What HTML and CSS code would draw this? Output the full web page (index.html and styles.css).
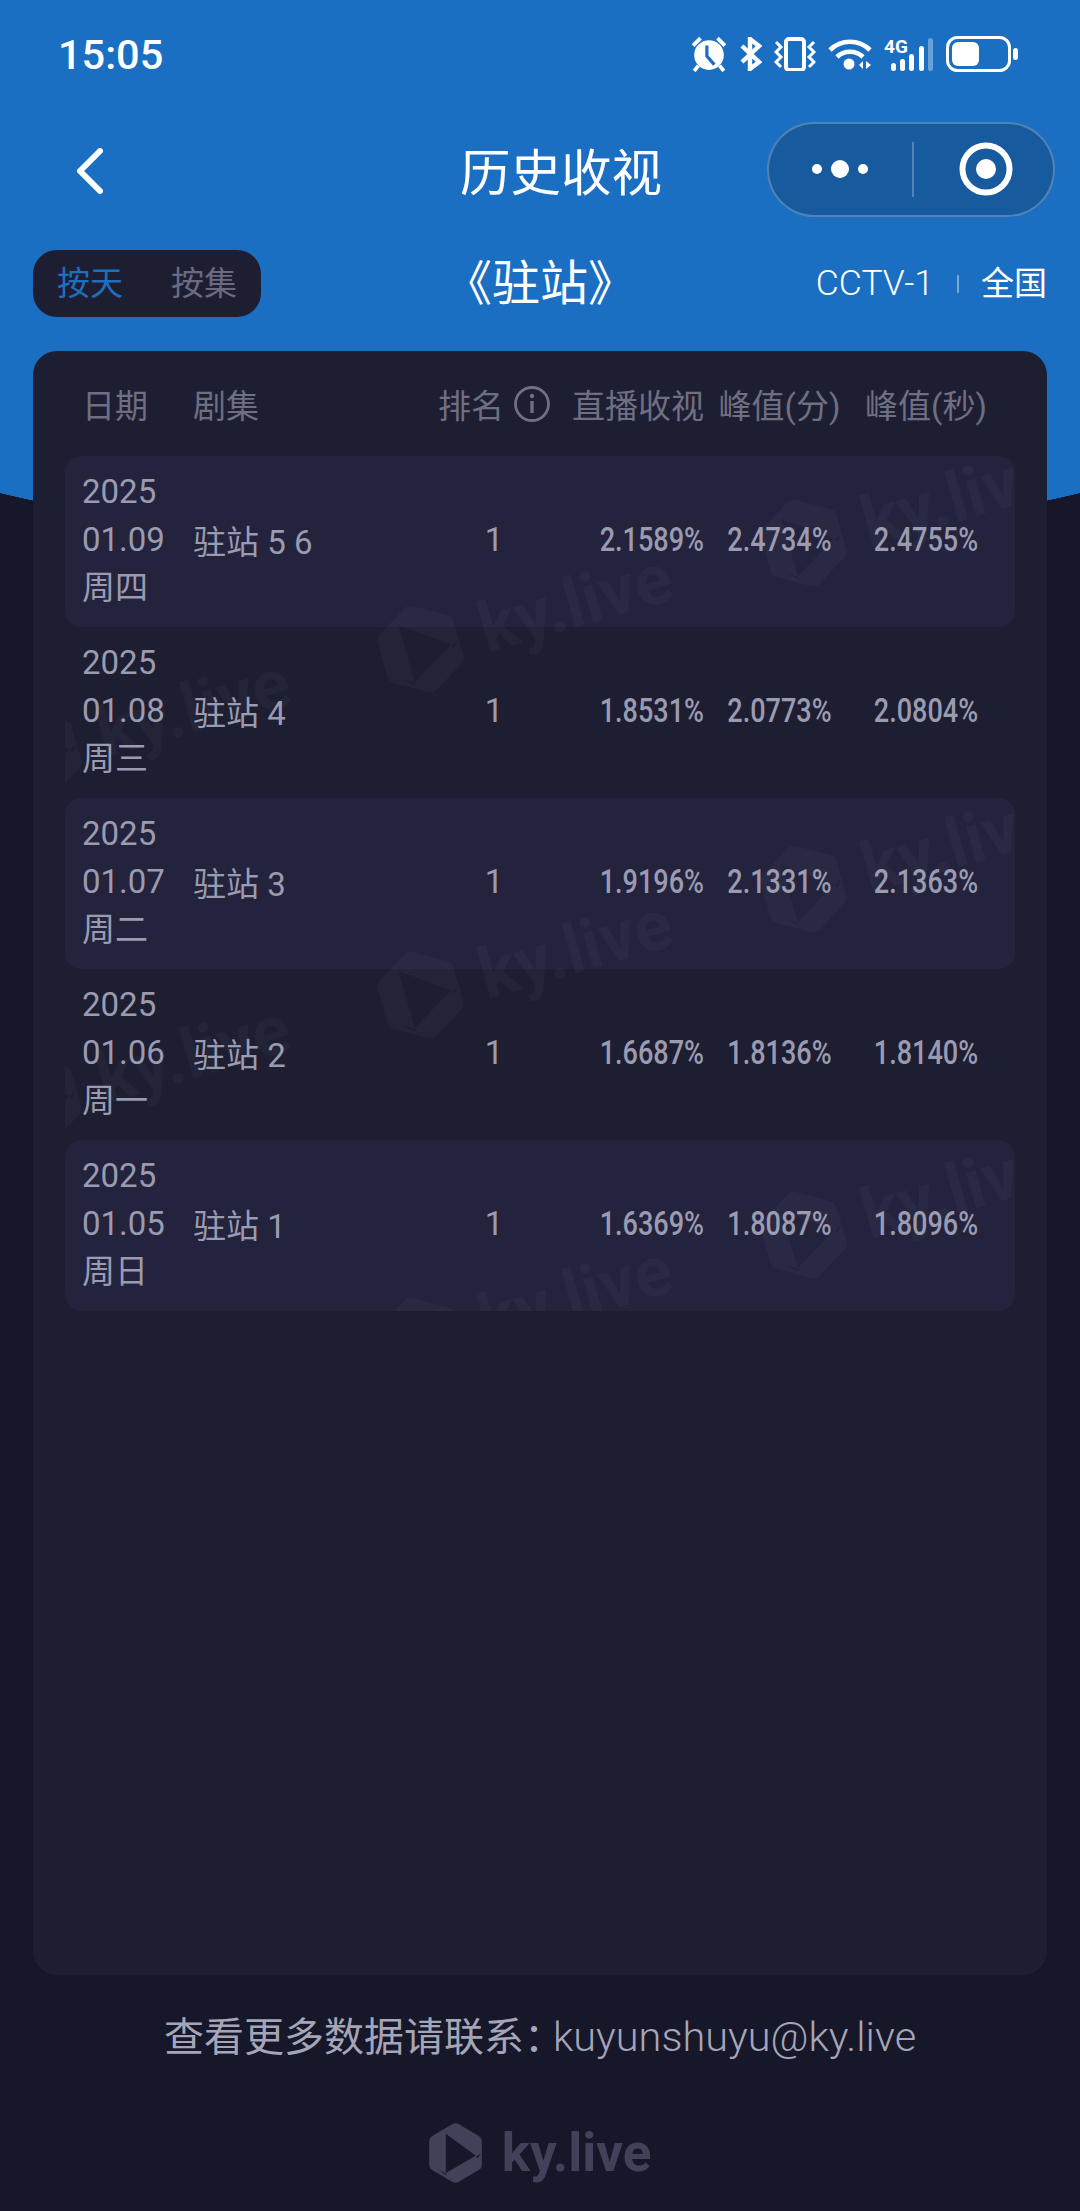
FILE: index.html
```html
<!DOCTYPE html>
<html lang="zh-CN">
<head>
    <meta charset="UTF-8">
    <meta name="viewport" content="width=device-width, initial-scale=1.0">
    <title>历史收视</title>
    <link rel="stylesheet" href="styles.css">
</head>

<body>
    <svg class="defs" width="0" height="0">
        <defs>
            <path id="logo" fill-rule="evenodd" d="M70 3Q79-2 88 3L150 40Q158 45 158 54V126Q158 135 150 140L88 177Q79 182 70 177L8 140Q0 135 0 126V54Q0 45 8 40ZM50 32V150L140 98ZM50 152L26 137L52 158ZM142 100L156 92L144 106Z"/>
        </defs>
    </svg>

    <div class="hero-bg"></div>

    <div class="status-bar">
        <span class="time">15:05</span>
        <div class="status-icons">
            <svg width="36" height="36" viewBox="0 0 34 34">
                <circle cx="17" cy="18" r="14" fill="#fff"/>
                <path d="M15 9V19L22 27" fill="none" stroke="#1b6fc2" stroke-width="3"/>
                <path d="M2 9L9 2M25 2L32 9M7 28L3 33M27 28L31 33" fill="none" stroke="#fff" stroke-width="3.6"/>
            </svg>
            <svg width="23" height="34" viewBox="0 0 23 34">
                <path d="M3 9L20 25L11 32V2L20 9L3 25" fill="none" stroke="#fff" stroke-width="4.4"/>
            </svg>
            <svg width="42" height="34" viewBox="0 0 42 34">
                <rect x="12" y="2" width="18" height="31" rx="3" fill="none" stroke="#fff" stroke-width="4"/>
                <path d="M2 5L7 10L2 15L7 20L2 25L7 30M40 5L35 10L40 15L35 20L40 25L35 30" fill="none" stroke="#fff" stroke-width="3"/>
            </svg>
            <svg width="44" height="33" viewBox="0 0 44 33">
                <path d="M2 12C13 1 31 1 42 12M9 19C16 12 28 12 35 19" fill="none" stroke="#fff" stroke-width="4.6"/>
                <circle cx="21" cy="26" r="5.5" fill="#fff"/>
                <path d="M31 27L35 23V31ZM43 27L38 23V31Z" fill="#fff"/>
            </svg>
            <svg width="50" height="36" viewBox="0 0 50 36">
                <text x="0" y="17" class="net-label">4G</text>
                <rect x="7" y="27" width="5" height="8" rx="2.5" fill="#fff"/>
                <rect x="16" y="23" width="5" height="12" rx="2.5" fill="#fff"/>
                <rect x="25" y="18" width="5" height="17" rx="2.5" fill="#fff"/>
                <rect x="35" y="10" width="5" height="25" rx="2.5" fill="#fff"/>
                <rect x="44" y="2" width="5" height="33" rx="2.5" fill="#fff" opacity="0.35"/>
            </svg>
            <svg width="72" height="36" viewBox="0 0 72 36">
                <rect x="1.5" y="1.5" width="62" height="33" rx="10" fill="none" stroke="#fff" stroke-width="3"/>
                <rect x="6" y="6" width="27" height="24" rx="6" fill="#fff"/>
                <rect x="67" y="12" width="5" height="12" rx="2.5" fill="#fff"/>
            </svg>
        </div>
    </div>

    <div class="nav">
        <svg class="back" width="26" height="46" viewBox="0 0 26 46">
            <path d="M23 3L3 23L23 43" fill="none" stroke="#fff" stroke-width="6" stroke-linecap="round" stroke-linejoin="round"/>
        </svg>
        <h1 class="nav-title">历史收视</h1>
        <div class="capsule">
            <div class="capsule-more">
                <span class="dot"></span>
                <span class="dot dot-big"></span>
                <span class="dot"></span>
            </div>
            <div class="capsule-close">
                <svg width="54" height="54" viewBox="0 0 54 54">
                    <circle cx="27" cy="27" r="23.5" fill="none" stroke="#fff" stroke-width="6"/>
                    <circle cx="27" cy="27" r="10" fill="#fff"/>
                </svg>
            </div>
        </div>
    </div>

    <div class="info-bar">
        <div class="segment">
            <span class="segment-on">按天</span>
            <span>按集</span>
        </div>
        <h2 class="show-name">《驻站》</h2>
        <div class="channel">
            <span class="channel-name">CCTV-1</span>
            <span class="channel-sep"></span>
            <span>全国</span>
        </div>
    </div>

    <div class="card">
        <div class="table-row table-head">
            <span>日期</span>
            <span>剧集</span>
            <span class="rank-head">排名
                <svg width="38" height="38" viewBox="0 0 36 36">
                    <circle cx="18" cy="18" r="16.5" fill="none" stroke="currentColor" stroke-width="2.8"/>
                    <path d="M18 15V27" stroke="currentColor" stroke-width="3.4"/>
                    <circle cx="18" cy="10" r="2.2" fill="currentColor"/>
                </svg>
            </span>
            <span class="live">直播收视</span>
            <span class="peak">峰值(分)</span>
            <span class="peak">峰值(秒)</span>
        </div>

        <div class="table-body">
            <div class="table-row">
                <div class="date">2025<br>01.09<br>周四</div>
                <span>驻站 5 6</span>
                <span class="rank">1</span>
                <span class="live num">2.1589%</span>
                <span class="peak num">2.4734%</span>
                <span class="peak num">2.4755%</span>
            </div>
            <div class="table-row">
                <div class="date">2025<br>01.08<br>周三</div>
                <span>驻站 4</span>
                <span class="rank">1</span>
                <span class="live num">1.8531%</span>
                <span class="peak num">2.0773%</span>
                <span class="peak num">2.0804%</span>
            </div>
            <div class="table-row">
                <div class="date">2025<br>01.07<br>周二</div>
                <span>驻站 3</span>
                <span class="rank">1</span>
                <span class="live num">1.9196%</span>
                <span class="peak num">2.1331%</span>
                <span class="peak num">2.1363%</span>
            </div>
            <div class="table-row">
                <div class="date">2025<br>01.06<br>周一</div>
                <span>驻站 2</span>
                <span class="rank">1</span>
                <span class="live num">1.6687%</span>
                <span class="peak num">1.8136%</span>
                <span class="peak num">1.8140%</span>
            </div>
            <div class="table-row">
                <div class="date">2025<br>01.05<br>周日</div>
                <span>驻站 1</span>
                <span class="rank">1</span>
                <span class="live num">1.6369%</span>
                <span class="peak num">1.8087%</span>
                <span class="peak num">1.8096%</span>
            </div>

            <!-- watermark over the rows -->
            <svg class="watermark" width="950" height="855" viewBox="0 0 950 855">
                <defs>
                    <g id="mark">
                        <use href="#logo" transform="translate(-40 -45) scale(0.5)"/>
                        <text x="62" y="22" class="mark-text">ky.live</text>
                    </g>
                </defs>
                <use href="#mark" transform="translate(356 193) rotate(-16)"/>
                <use href="#mark" transform="translate(356 539) rotate(-16)"/>
                <use href="#mark" transform="translate(356 885) rotate(-16)"/>
                <use href="#mark" transform="translate(739 87) rotate(-16)"/>
                <use href="#mark" transform="translate(739 433) rotate(-16)"/>
                <use href="#mark" transform="translate(739 779) rotate(-16)"/>
                <use href="#mark" transform="translate(-26 298) rotate(-16)"/>
                <use href="#mark" transform="translate(-26 644) rotate(-16)"/>
            </svg>
        </div>
    </div>

    <p class="contact">查看更多数据请联系：<span class="contact-mail">kuyunshuyu@ky.live</span></p>

    <div class="brand">
        <svg width="53" height="60" viewBox="0 0 158 180"><use href="#logo"/></svg>
        <span>ky.live</span>
    </div>
</body>
</html>
```

FILE: styles.css
```css
* {
    margin: 0;
    padding: 0;
    box-sizing: border-box;
}

body {
    position: relative;
    width: 1080px;
    height: 2211px;
    overflow: hidden;
    background: #17172a;
    color: #fff;
    font-family: Roboto, "Noto Sans CJK SC", sans-serif;
}

.defs {
    position: absolute;
}

/* blue area with the curved bottom edge */
.hero-bg {
    position: absolute;
    top: 0;
    left: 0;
    width: 100%;
    height: 548px;
    background:
        linear-gradient(#1b6fc2, #1b6fc2) top / 100% 355px no-repeat,
        radial-gradient(774px 193px at 540px 355px, #1b6fc2 99.8%, transparent 100%);
}

/* status bar */
.status-bar {
    position: relative;
    display: flex;
    justify-content: space-between;
    align-items: center;
    height: 108px;
    padding: 0 62px 0 58px;
}

.time {
    font-size: 41.5px;
    font-weight: 500;
}

.status-icons {
    display: flex;
    align-items: center;
    gap: 12px;
}

.net-label {
    font-size: 19px;
    font-weight: 700;
    fill: #fff;
}

/* nav */
.nav {
    position: relative;
    display: flex;
    align-items: center;
    height: 122px;
    padding: 0 25px 0 77px;
}

.back {
    flex: none;
    margin-top: 4px;
}

.nav-title {
    flex: 1;
    padding-left: 252px;
    text-align: center;
    font-size: 50.5px;
    font-weight: 400;
}

.capsule {
    display: flex;
    flex: none;
    width: 288px;
    height: 95px;
    background: #175a9e;
    border: 2px solid rgba(255, 255, 255, 0.25);
    border-radius: 48px;
}

.capsule-more,
.capsule-close {
    display: flex;
    justify-content: center;
    align-items: center;
}

.capsule-more {
    position: relative;
    flex: 0 0 145px;
    gap: 9px;
    padding-right: 3px;
}

.capsule-more::after {
    content: "";
    position: absolute;
    top: 18px;
    bottom: 18px;
    right: 0;
    width: 2px;
    background: rgba(255, 255, 255, 0.25);
}

.capsule-close {
    flex: 1;
    padding-left: 4px;
}

.dot {
    width: 10px;
    height: 10px;
    background: #fff;
    border-radius: 50%;
}

.dot-big {
    width: 18px;
    height: 18px;
}

/* show name row */
.info-bar {
    position: relative;
    display: grid;
    grid-template-columns: 1fr auto 1fr;
    align-items: center;
    height: 67px;
    margin-top: 20px;
    padding: 0 33px;
}

.segment {
    display: flex;
    justify-content: space-between;
    align-items: center;
    width: 228px;
    height: 67px;
    padding: 0 24px;
    background: #1e1e33;
    border-radius: 24px;
    color: #6a6a80;
    font-size: 33px;
    line-height: 1;
}

.segment-on {
    color: #1f6fbf;
}

.show-name {
    font-size: 48px;
    font-weight: 400;
    line-height: 1;
}

.channel {
    display: flex;
    justify-content: flex-end;
    align-items: center;
    font-size: 33px;
    line-height: 1;
}

.channel-name {
    font-size: 35.5px;
    font-weight: 300;
}

.channel-sep {
    width: 2px;
    height: 18px;
    margin: 0 22px 0 23px;
    background: rgba(255, 255, 255, 0.4);
}

/* table card */
.card {
    position: relative;
    height: 1624px;
    margin: 34px 33px 0;
    padding: 0 32px;
    background: #1e1e33;
    border-radius: 24px;
}

.table-row {
    display: grid;
    grid-template-columns: 111px 245px 112px 154px 151px 1fr;
    align-items: center;
    height: 171px;
    padding: 0 18px 4px 17px;
    color: #9b9bb0;
    font-size: 33px;
    border-radius: 16px;
}

.table-head {
    height: 105px;
    padding-top: 1px;
    padding-bottom: 0;
    color: #6f6f82;
}

.table-body {
    position: relative;
    height: 855px;
    overflow: hidden;
    border-radius: 16px;
}

.table-body .table-row:nth-child(odd) {
    background: #24233e;
}

.date {
    line-height: 48px;
}

.rank-head {
    display: flex;
    align-items: center;
    gap: 10px;
    white-space: nowrap;
}

.rank {
    text-align: center;
}

.live {
    text-align: right;
    white-space: nowrap;
}

.peak {
    text-align: center;
    white-space: nowrap;
}

/* the figures are set narrower than the rest */
.num {
    font-weight: 500;
    transform: scaleX(0.82);
}

.live.num {
    transform-origin: right center;
}

.watermark {
    position: absolute;
    top: 0;
    left: 0;
    fill: rgba(255, 255, 255, 0.028);
    pointer-events: none;
}

.mark-text {
    font-family: Roboto, sans-serif;
    font-size: 70px;
    font-weight: 700;
}

/* footer */
.contact {
    position: relative;
    margin-top: 32px;
    color: #a6a5b8;
    font-size: 40px;
    line-height: 60px;
    text-align: center;
}

.contact-mail {
    margin-left: -11px;
    font-size: 41.5px;
    font-weight: 300;
}

.brand {
    display: flex;
    justify-content: center;
    align-items: center;
    gap: 20px;
    margin-top: 55px;
    color: #41415a;
    fill: #41415a;
    font-size: 53px;
    font-weight: 700;
    line-height: 60px;
}
```
